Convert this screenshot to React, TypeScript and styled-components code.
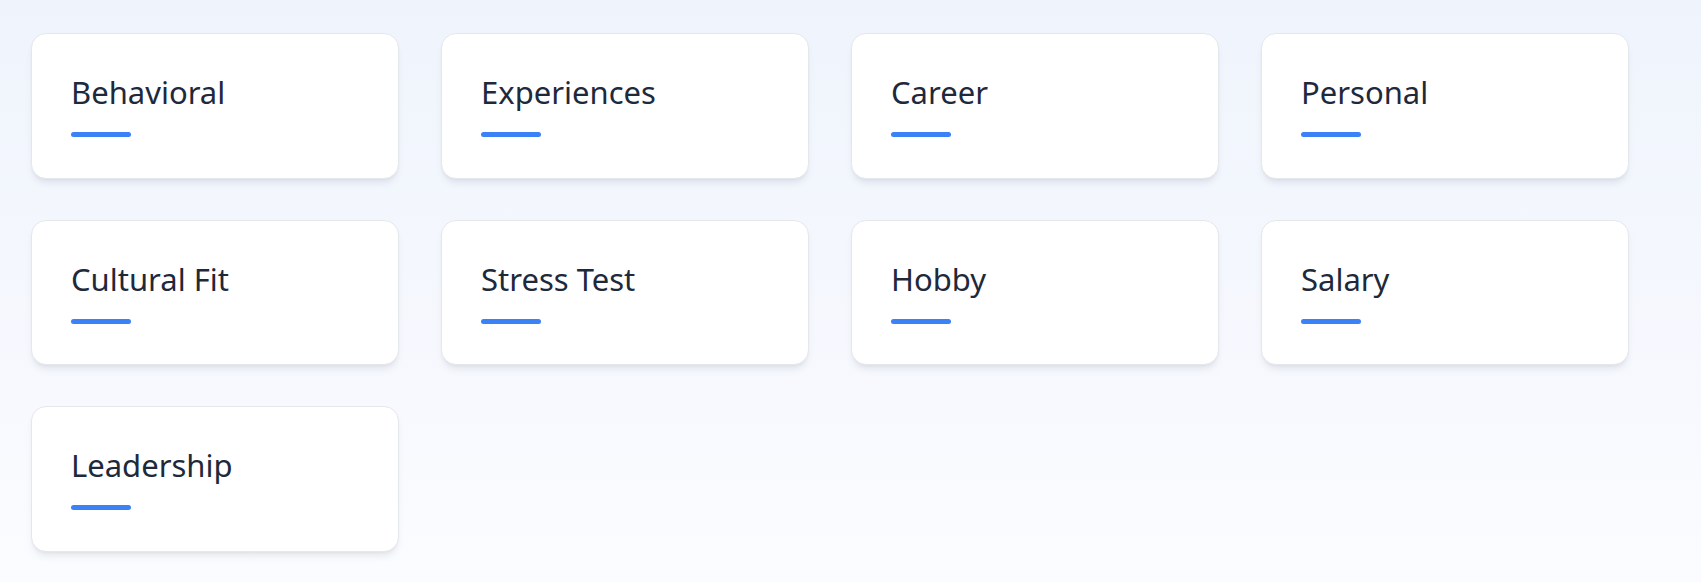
import styled, { createGlobalStyle } from "styled-components";

const GlobalStyle = createGlobalStyle`
  html, body {
    margin: 0;
    padding: 0;
  }
  body {
    font-family: "Noto Sans", "Open Sans", "Liberation Sans", sans-serif;
    background: linear-gradient(180deg, #eff4fc 0%, #f6f8fe 60%, #fbfcff 100%);
    min-height: 582px;
  }
`;

const Page = styled.div`
  min-height: 582px;
  padding: 33px 0 0 31px;
  box-sizing: border-box;
`;

const Grid = styled.div`
  display: grid;
  grid-template-columns: repeat(4, 368px);
  column-gap: 42px;
  row-gap: 41px;
`;

const Card = styled.div`
  box-sizing: border-box;
  height: 145.5px;
  background: #ffffff;
  border: 1px solid #e4e7ec;
  border-radius: 15px;
  box-shadow: 0 6px 9px -3px rgba(15, 23, 42, 0.1),
    0 2px 4px -2px rgba(15, 23, 42, 0.06);
  padding: 38px 39px 40px;
  display: flex;
  flex-direction: column;
  align-items: flex-start;
  cursor: pointer;
`;

const Title = styled.h3`
  margin: 0;
  font-size: 31px;
  line-height: 40px;
  font-weight: 400;
  color: #1e293b;
`;

const Bar = styled.div`
  margin-top: 20px;
  width: 60px;
  height: 5px;
  border-radius: 3px;
  background: #3b82f6;
`;

const categories = [
  "Behavioral",
  "Experiences",
  "Career",
  "Personal",
  "Cultural Fit",
  "Stress Test",
  "Hobby",
  "Salary",
  "Leadership",
];

export default function App() {
  return (
    <>
      <GlobalStyle />
      <Page>
        <Grid>
          {categories.map((name) => (
            <Card key={name}>
              <Title>{name}</Title>
              <Bar />
            </Card>
          ))}
        </Grid>
      </Page>
    </>
  );
}
